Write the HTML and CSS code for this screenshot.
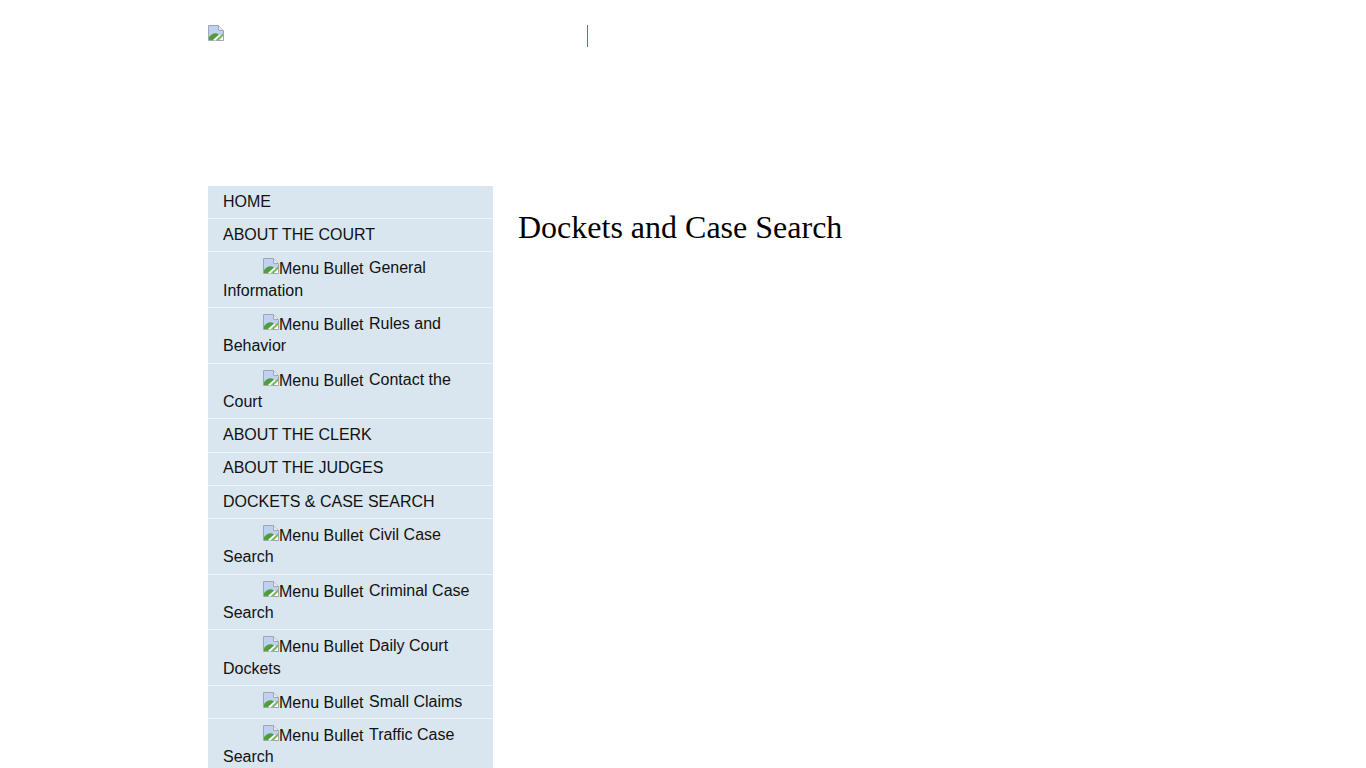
FILE: index.html
```html
<!DOCTYPE html>
<html lang="en">
<head>
  <meta charset="UTF-8" />
  <title>Dockets and Case Search</title>
  <link rel="stylesheet" href="styles.css">
</head>
<body>

<div class="wrapper">
  <!-- Header -->
  <div class="header">
    <div class="logo">
      <svg class="broken" width="16" height="16" viewBox="0 0 16 16"><use href="#broken-img"/></svg>
    </div>
    <div class="divider"></div>
  </div>

  <div class="main">
    <!-- Side menu -->
    <ul class="menu">
      <li><a href="#">HOME</a></li>
      <li><a href="#">ABOUT THE COURT</a></li>
      <li class="sub"><a href="#"><span class="bullet"><svg width="16" height="16" viewBox="0 0 16 16"><use href="#broken-img"/></svg>Menu Bullet</span> <span class="label">General Information</span></a></li>
      <li class="sub"><a href="#"><span class="bullet"><svg width="16" height="16" viewBox="0 0 16 16"><use href="#broken-img"/></svg>Menu Bullet</span> <span class="label">Rules and Behavior</span></a></li>
      <li class="sub"><a href="#"><span class="bullet"><svg width="16" height="16" viewBox="0 0 16 16"><use href="#broken-img"/></svg>Menu Bullet</span> <span class="label">Contact the Court</span></a></li>
      <li><a href="#">ABOUT THE CLERK</a></li>
      <li><a href="#">ABOUT THE JUDGES</a></li>
      <li><a href="#">DOCKETS &amp; CASE SEARCH</a></li>
      <li class="sub"><a href="#"><span class="bullet"><svg width="16" height="16" viewBox="0 0 16 16"><use href="#broken-img"/></svg>Menu Bullet</span> <span class="label">Civil Case Search</span></a></li>
      <li class="sub"><a href="#"><span class="bullet"><svg width="16" height="16" viewBox="0 0 16 16"><use href="#broken-img"/></svg>Menu Bullet</span> <span class="label">Criminal Case Search</span></a></li>
      <li class="sub"><a href="#"><span class="bullet"><svg width="16" height="16" viewBox="0 0 16 16"><use href="#broken-img"/></svg>Menu Bullet</span> <span class="label">Daily Court Dockets</span></a></li>
      <li class="sub"><a href="#"><span class="bullet"><svg width="16" height="16" viewBox="0 0 16 16"><use href="#broken-img"/></svg>Menu Bullet</span> <span class="label">Small Claims</span></a></li>
      <li class="sub"><a href="#"><span class="bullet"><svg width="16" height="16" viewBox="0 0 16 16"><use href="#broken-img"/></svg>Menu Bullet</span> <span class="label">Traffic Case Search</span></a></li>
    </ul>

    <div class="content">
      <h1>Dockets and Case Search</h1>
    </div>
  </div>
</div>

<svg class="defs" width="0" height="0">
  <symbol id="broken-img" viewBox="0 0 16 16">
    <path d="M0.5 0.5H10.5L15.5 5.5V15.5H0.5Z" fill="#fff" stroke="#9ea7b3"/>
    <path d="M10.5 0.5V5.5H15.5" fill="#e6eaf0" stroke="#9ea7b3"/>
    <path d="M1 1H10V6H15V10L1 13Z" fill="#bfd0f0"/>
    <path d="M1 15V12C4 8 8 7 11 9.5L5 15Z" fill="#4f9e3a"/>
    <path d="M7 15L15 8.5V11L11 15Z" fill="#76b85a"/>
    <path d="M5.5 15.5L11.5 9.5L12.5 10.2L7.5 15.5Z" fill="#fff"/>
  </symbol>
</svg>

</body>
</html>
```

FILE: styles.css
```css
html, body {
  height: 768px;
  overflow: hidden;
}
body {
  margin: 0;
  padding: 0;
  background-color: #fff;
  font-family: "Liberation Serif", serif;
  color: #000;
}
.wrapper {
  width: 950px;
  margin: 0 auto;
}
.header {
  height: 186px;
  display: flex;
  align-items: flex-start;
  box-sizing: border-box;
  padding-top: 25px;
}
.logo {
  width: 379px;
  height: 16px;
}
.broken {
  display: block;
}
.divider {
  width: 1px;
  height: 22px;
  background-color: #2f86b8;
}
.main {
  display: flex;
  align-items: flex-start;
}
.menu {
  width: 285px;
  margin: 0;
  padding: 0;
  list-style: none;
  flex-shrink: 0;
  font-family: "Liberation Sans", Arial, sans-serif;
  font-size: 16px;
  line-height: 22.4px;
}
.menu li {
  background-color: #d9e6ef;
  border-bottom: 1px solid #eef4f8;
  padding: 4.92px 15px;
}
.menu a {
  color: #111;
  text-decoration: none;
}
.menu .sub {
  text-indent: 40px;
}
.bullet svg {
  vertical-align: 0;
}
.bullet {
  position: relative;
  top: 1px;
}
.label {
  margin-left: 1px;
}
.content {
  padding-left: 25px;
}
h1 {
  margin: 23px 0 0;
  font-size: 32px;
  font-weight: normal;
  line-height: 37px;
}
.defs {
  position: absolute;
}
```
